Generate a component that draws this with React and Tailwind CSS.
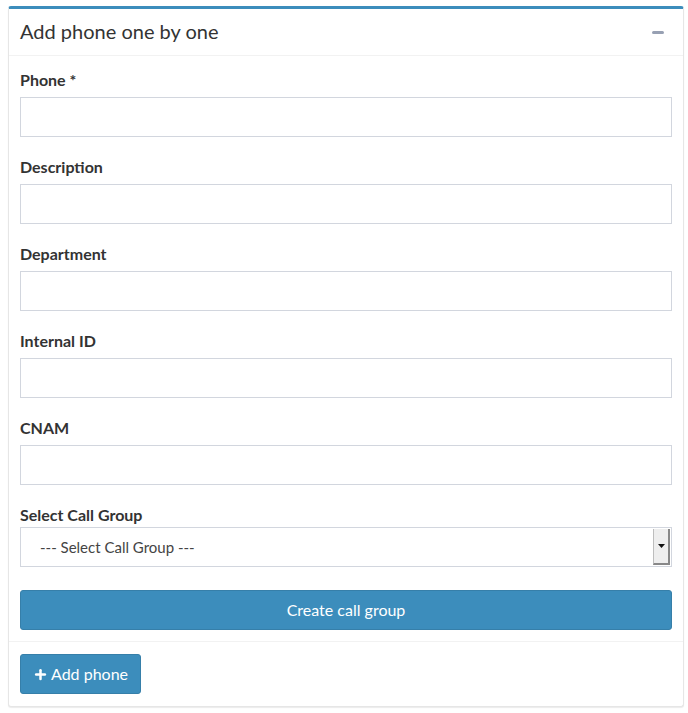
import { Plus } from 'lucide-react'

const fields = ['Phone *', 'Description', 'Department', 'Internal ID', 'CNAM']

const App = () => {
  return (
    <div className="bg-white min-h-screen pt-[6px] pl-2 pr-1" style={{ fontFamily: 'Lato, "Open Sans", sans-serif' }}>
      <div className="border-t-[3px] border-[#3c8dbc] rounded-[3px] bg-white border-x border-b border-x-[#e6e6e6] border-b-[#e6e6e6] shadow-[0_1px_1px_rgba(0,0,0,0.08)]">
        {/* Header */}
        <div className="h-[47px] flex items-center justify-between px-[11px] border-b border-[#f2f2f2]">
          <h3 className="text-[20px] text-[#333] -mt-[2px]">Add phone one by one</h3>
          <div className="w-[12px] h-[3px] bg-[#97a0b3] rounded-sm mr-[8px]" />
        </div>

        {/* Body */}
        <div className="px-[11px] pt-[15px] pb-[11px]">
          {fields.map((label) => (
            <div key={label} className="mb-[21px]">
              <label className="block text-[16px] font-bold text-[#333] leading-[18px] mb-[8px]">{label}</label>
              <input type="text" className="block w-full h-[40px] border border-[#d2d6de] px-3 outline-none" />
            </div>
          ))}
          <div className="mb-[23px]">
            <label className="block text-[16px] font-bold text-[#333] leading-[18px] mb-[3px]">Select Call Group</label>
            <div className="flex h-[40px] border border-[#d2d6de]">
              <div className="flex-1 flex items-center pl-[19px] text-[15px] text-[#444]">--- Select Call Group ---</div>
              <div className="w-[17px] my-[1px] mr-[1px] bg-[#eeeeee] border-l border-[#bdbdbd] border-r-2 border-b-2 border-r-[#888] border-b-[#888] flex items-center justify-center">
                <svg width="7" height="4" viewBox="0 0 7 4"><path d="M0 0h7L3.5 4z" fill="#111" /></svg>
              </div>
            </div>
          </div>
          <button className="w-full h-[40px] bg-[#3c8dbc] border border-[#367fa9] rounded-[3px] text-white text-[16px]">
            Create call group
          </button>
        </div>

        {/* Footer */}
        <div className="border-t border-[#f2f2f2] px-[11px] pt-[12px] pb-[12px]">
          <button className="h-[40px] px-[12px] bg-[#3c8dbc] border border-[#367fa9] rounded-[3px] text-white text-[16px] flex items-center gap-[3px]">
            <Plus size={15} strokeWidth={4} />
            Add phone
          </button>
        </div>
      </div>
    </div>
  )
}

export default App
